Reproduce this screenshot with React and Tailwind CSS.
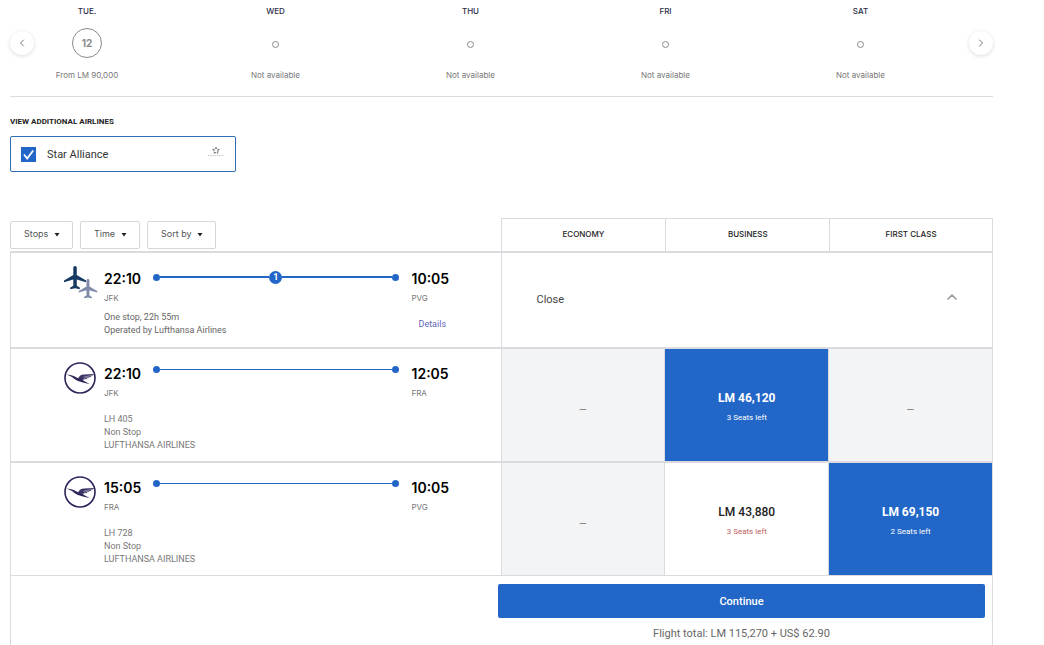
import React from 'react';
import { ChevronLeft, ChevronRight, ChevronUp } from 'lucide-react';

const days = [
  { name: 'WED', fare: 'Not available' },
  { name: 'THU', fare: 'Not available' },
  { name: 'FRI', fare: 'Not available' },
  { name: 'SAT', fare: 'Not available' },
];

const filters = ['Stops', 'Time', 'Sort by'];

const filterWidths = {
  Stops: 'w-[63px]',
  Time: 'w-[60px]',
  'Sort by': 'w-[69px]',
};

const legs = [
  {
    flight: 'LH 405',
    carrier: 'LUFTHANSA AIRLINES',
    from: { time: '22:10', code: 'JFK' },
    to: { time: '12:05', code: 'FRA' },
    fares: [null, { price: 'LM 46,120', seats: '3 Seats left', selected: true }, null],
  },
  {
    flight: 'LH 728',
    carrier: 'LUFTHANSA AIRLINES',
    from: { time: '15:05', code: 'FRA' },
    to: { time: '10:05', code: 'PVG' },
    fares: [
      null,
      { price: 'LM 43,880', seats: '3 Seats left', selected: false },
      { price: 'LM 69,150', seats: '2 Seats left', selected: true },
    ],
  },
];

const PLANE =
  'M21 16v-1.6l-8-4.6V3.5c0-.83-.67-1.5-1.5-1.5S10 2.67 10 3.5v6.300l-8 4.600V16l8-2.300V19l-2.600 1.500V22l4.100-.8 4.100.8v-1.500L13 19v-5.300l8 2.300z';

const PlanesIcon = () => (
  <svg viewBox="0 0 34 34" className="w-[34px] h-[34px]" aria-hidden="true">
    <path d={PLANE} fill="#173a63" transform="translate(-2.3 -2.3) scale(1.16)" />
    <path d={PLANE} fill="#7f8aab" transform="translate(12.8 11) scale(0.97)" />
  </svg>
);

const CraneIcon = () => (
  <svg viewBox="0 0 32 32" className="w-8 h-8" aria-hidden="true">
    <circle cx="16" cy="16" r="15" fill="#fff" stroke="#2b2458" strokeWidth="1.6" />
    <path d="M2 12.600l4 .4c3 .4 5.500 1.800 8 3.200l2.500-.3 3.500 3 6 3.300-8-2c-3-.7-5.500-1.700-7.500-3.200C8 15 6.500 14 2 12.600z" fill="#2b2458" />
    <path d="M14 16.200c2-2.800 3.200-3.700 6-3.700l10-.5c-.5 1-1.400 1.500-2.400 1.700-.3.900-1 1.300-2 1.400-.4.800-1.200 1.200-2.200 1.200-.6.800-1.800 1-3 .9-1.600 1-4.400 1-6.400-1z" fill="#3a3566" />
    <path d="M19.500 15.200l8.500-1.900M20 16.400l5.500-1.400" stroke="#fff" strokeWidth="0.4" />
  </svg>
);

const StarAllianceLogo = () => (
  <svg viewBox="0 0 18 12" className="w-[18px] h-3" aria-hidden="true">
    <g fill="none" stroke="#777" strokeWidth="1.1">
      <circle cx="9" cy="4.500" r="2.200" strokeDasharray="2 .8" />
      <path d="M9 1v1.500M12.500 3.300l-1.500.5M11.200 7.500l-1-1.200M6.800 7.500l1-1.200M5.500 3.300l1.500.5" />
    </g>
    <path d="M1 9.500h16" stroke="#ccc" strokeWidth="1" strokeDasharray="1.500 .7" />
  </svg>
);

const Calendar = () => (
  <section className="flex items-center pt-[5px] pb-[15px] border-b border-[#dcdcdc] font-['Inter',sans-serif]">
    <button
      aria-label="Previous days"
      className="w-6 h-6 shrink-0 rounded-full bg-white shadow-[0_1px_4px_rgba(0,0,0,0.14)] flex items-center justify-center text-[#777]"
    >
      <ChevronLeft size={12} strokeWidth={2} />
    </button>

    <div className="w-[106px] mr-[38px] shrink-0 flex flex-col items-center text-[8px] leading-[12px]">
      <p className="font-medium text-[#2b2b45]">TUE.</p>
      <button className="w-[30px] h-[30px] my-[11px] rounded-full border border-[#8a8a8a] text-[10px] font-bold text-[#8a8a8a]">
        12
      </button>
      <p className="text-[#777]">From LM 90,000</p>
    </div>

    {days.map((day) => (
      <div key={day.name} className="flex-1 flex flex-col items-center text-[8px] leading-[12px]">
        <p className="font-medium text-[#2b2b45]">{day.name}</p>
        <div className="h-[30px] my-[11px] pt-0.5 flex items-center">
          <span className="w-[7px] h-[7px] rounded-full border border-[#8a8a8a]" />
        </div>
        <p className="text-[#777]">{day.fare}</p>
      </div>
    ))}

    <button
      aria-label="Next days"
      className="w-6 h-6 ml-[11px] shrink-0 rounded-full bg-white shadow-[0_1px_4px_rgba(0,0,0,0.14)] flex items-center justify-center text-[#777]"
    >
      <ChevronRight size={12} strokeWidth={2} />
    </button>
  </section>
);

const Airlines = () => (
  <section className="pt-[19px]">
    <h2 className="text-[8px] leading-[12px] font-bold text-[#222]">VIEW ADDITIONAL AIRLINES</h2>
    <label className="mt-2 w-[226px] h-9 px-[10px] flex items-center rounded-[2px] border border-[#2f6db5]">
      <span className="grid w-[15px] h-[15px]">
        <input
          type="checkbox"
          defaultChecked
          className="peer col-start-1 row-start-1 w-[15px] h-[15px] appearance-none border border-[#2267c7] checked:bg-[#2267c7]"
        />
        <svg viewBox="0 0 15 15" className="col-start-1 row-start-1 pointer-events-none invisible peer-checked:visible">
          <path d="M3 7.500l3.200 4 6-8" fill="none" stroke="#fff" strokeWidth="1.800" />
        </svg>
      </span>
      <span className="ml-[11px] pt-0.5 text-[11px] text-[#333]">Star Alliance</span>
      <span className="ml-auto pb-1">
        <StarAllianceLogo />
      </span>
    </label>
  </section>
);

const Filter = ({ name }) => (
  <div className="grid items-center">
    <select
      aria-label={name}
      className={`col-start-1 row-start-1 h-7 pl-[13px] pb-0.5 appearance-none rounded-[2px] border border-[#d6d6d6] bg-white font-['Inter',sans-serif] text-[9px] font-normal text-[#555] ${filterWidths[name]}`}
    >
      <option>{name}</option>
    </select>
    <svg viewBox="0 0 6 4" className="col-start-1 row-start-1 justify-self-end mr-[13px] w-[6px] h-1 pointer-events-none">
      <path d="M.5 0h5L3 3.500z" fill="#222" />
    </svg>
  </div>
);

const Stop = ({ time, code, className }) => (
  <div className={`font-['Inter',sans-serif] ${className}`}>
    <p className="text-[14px] leading-5 font-semibold text-black">{time}</p>
    <p className="text-[8px] leading-[18px] text-[#777]">{code}</p>
  </div>
);

const Dot = () => <span className="w-[7px] h-[7px] shrink-0 rounded-full bg-[#2267c7]" />;

const Fare = ({ fare }) => {
  if (!fare) {
    return (
      <td className="border-t-2 border-r border-[#dadbde] bg-[#f3f4f6] p-0 pt-2.5 text-center align-middle text-[13px] text-[#888]">
        –
      </td>
    );
  }
  return (
    <td className="h-[114px] border-t-2 border-r border-[#dadbde] p-0">
      <button
        className={`w-full h-28 pt-1.5 flex flex-col items-center justify-center ${
          fare.selected ? 'bg-[#2267c7] text-white' : 'bg-white text-[#222]'
        }`}
      >
        <span className={`text-[12px] leading-5 ${fare.selected ? 'font-bold' : 'font-medium'}`}>{fare.price}</span>
        <span className={`text-[8px] leading-5 ${fare.selected ? 'text-white' : 'text-[#c0605f]'}`}>{fare.seats}</span>
      </button>
    </td>
  );
};

const SummaryRow = () => (
  <tr>
    <td className="h-24 border-t-2 border-x border-[#dadbde] p-0 align-top">
      <div className="flex pt-[13px] pl-[53px]">
        <div className="w-10 shrink-0">
          <PlanesIcon />
        </div>
        <div className="flex-1 pt-[3px]">
          <div className="flex">
            <Stop time="22:10" code="JFK" className="w-[49px]" />
            <div className="flex-1 h-[14px] mt-px flex items-center">
              <Dot />
              <span className="flex-1 h-0.5 bg-[#2267c7]" />
              <span className="w-[13px] h-[13px] rounded-full bg-[#2267c7] text-white text-[9px] leading-[13px] font-bold text-center">
                1
              </span>
              <span className="flex-1 h-0.5 bg-[#2267c7]" />
              <Dot />
            </div>
            <Stop time="10:05" code="PVG" className="w-[102px] pl-[13px]" />
          </div>
          <div className="mt-1 flex justify-between text-[9px] leading-[13px] text-[#666]">
            <div>
              <p>One stop, 22h 55m</p>
              <p>Operated by Lufthansa Airlines</p>
            </div>
            <a href="#details" className="w-[82px] pt-[7px] text-[#5f66b8]">
              Details
            </a>
          </div>
        </div>
      </div>
    </td>
    <td colSpan={3} className="border-t-2 border-r border-[#dadbde] p-0">
      <button className="w-full h-[94px] pl-[35px] pr-8 flex items-center justify-between text-[11px] text-[#444]">
        Close
        <ChevronUp size={16} strokeWidth={2.5} className="mb-1.5 text-[#999]" />
      </button>
    </td>
  </tr>
);

const LegRow = ({ leg }) => (
  <tr>
    <td className="h-[114px] border-t-2 border-x border-[#dadbde] p-0 align-top">
      <div className="flex pt-[13px] pl-[53px]">
        <div className="w-10 shrink-0">
          <CraneIcon />
        </div>
        <div className="flex-1 pt-0.5">
          <div className="flex">
            <Stop {...leg.from} className="w-[49px]" />
            <div className="flex-1 h-2 mt-px flex items-center">
              <Dot />
              <span className="flex-1 h-px bg-[#2267c7]" />
              <Dot />
            </div>
            <Stop {...leg.to} className="w-[102px] pl-[13px]" />
          </div>
          <div className="mt-[11px] text-[9px] leading-[13px] text-[#777]">
            <p>{leg.flight}</p>
            <p>Non Stop</p>
            <p>{leg.carrier}</p>
          </div>
        </div>
      </div>
    </td>
    {leg.fares.map((fare, i) => (
      <Fare key={i} fare={fare} />
    ))}
  </tr>
);

const Flights = () => (
  <table className="w-full mt-[46px] table-fixed border-separate border-spacing-0">
    <colgroup>
      <col className="w-1/2" />
      <col className="w-1/6" />
      <col className="w-1/6" />
      <col className="w-1/6" />
    </colgroup>
    <thead>
      <tr className="font-['Inter',sans-serif] text-[8px] text-[#222]">
        <td className="h-[33px] p-0 border-r border-[#dadbde]">
          <div className="flex gap-[7px] pt-px">
            {filters.map((name) => (
              <Filter key={name} name={name} />
            ))}
          </div>
        </td>
        {['ECONOMY', 'BUSINESS', 'FIRST CLASS'].map((cabin) => (
          <th
            key={cabin}
            scope="col"
            className="p-0 pb-0.5 border-t border-l first-of-type:border-l-0 last:border-r border-[#dadbde] font-medium"
          >
            {cabin}
          </th>
        ))}
      </tr>
    </thead>
    <tbody>
      <SummaryRow />
      {legs.map((leg) => (
        <LegRow key={leg.flight} leg={leg} />
      ))}
    </tbody>
  </table>
);

const App = () => {
  return (
    <main className="min-h-screen pl-[10px] pr-[51px] flex flex-col bg-white font-['Roboto','Liberation_Sans',sans-serif]">
      <Calendar />
      <Airlines />
      <Flights />
      <div className="flex-1 flex justify-end border-t border-x border-[#dadbde] pt-2 pr-[7px]">
        <div className="w-1/2 text-center">
          <button className="w-full h-[34px] pt-0.5 rounded-[2px] bg-[#2267c7] text-[11px] font-medium text-white">
            Continue
          </button>
          <p className="mt-1.5 text-[11px] leading-4 pt-0.5 text-[#666]">Flight total: LM 115,270 + US$ 62.90</p>
        </div>
      </div>
    </main>
  );
};

export default App;
